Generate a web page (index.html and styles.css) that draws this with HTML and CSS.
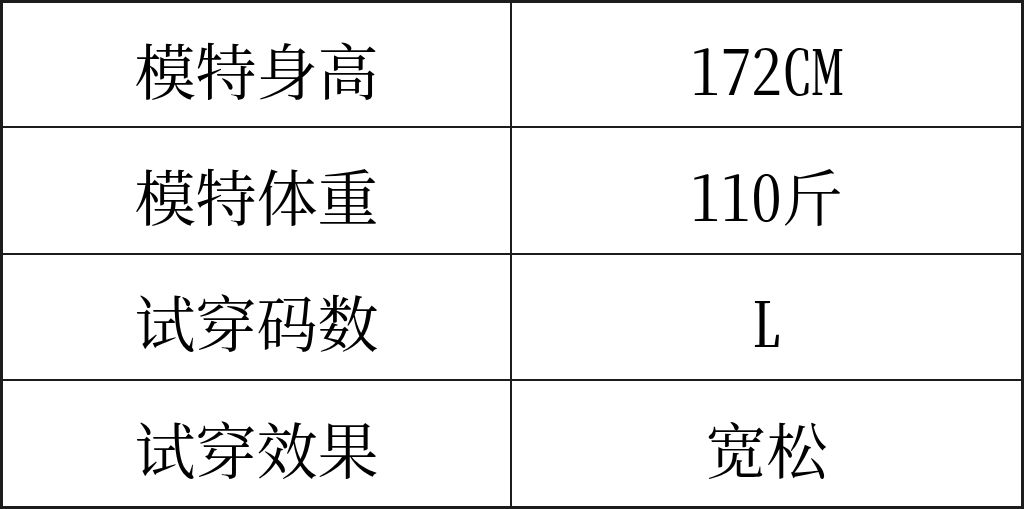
FILE: index.html
```html
<!DOCTYPE html>
<html lang="zh-CN">
<head>
<meta charset="utf-8">
<title>试穿信息</title>
<link rel="stylesheet" href="styles.css">
</head>
<body>
<table class="spec">
  <tr><td class="label">模特身高</td><td class="value">172CM</td></tr>
  <tr><td class="label">模特体重</td><td class="value">110斤</td></tr>
  <tr><td class="label">试穿码数</td><td class="value">L</td></tr>
  <tr><td class="label">试穿效果</td><td class="value">宽松</td></tr>
</table>
</body>
</html>
```

FILE: styles.css
```css
html, body {
  margin: 0;
  padding: 0;
  background: #ffffff;
}
.spec {
  width: 1024px;
  border-collapse: collapse;
  table-layout: fixed;
  border: 3px solid #1c1c1c;
  font-family: "Noto Serif CJK SC", "Liberation Serif", "Noto Sans CJK SC", serif;
  font-size: 61px;
  color: #000;
}
.spec tr {
  height: 127px;
}
.spec tr:first-child {
  height: 125px;
}
.spec tr:nth-child(3) {
  height: 126px;
}
.spec tr:last-child {
  height: 128px;
}
.spec td {
  border: 2px solid #1c1c1c;
  text-align: center;
  vertical-align: middle;
  padding: 8px 0 0 0;
  line-height: 1;
}
.spec .label {
  width: 507px;
}
.spec .value {
  font-feature-settings: "hwid" 1;
}
```
